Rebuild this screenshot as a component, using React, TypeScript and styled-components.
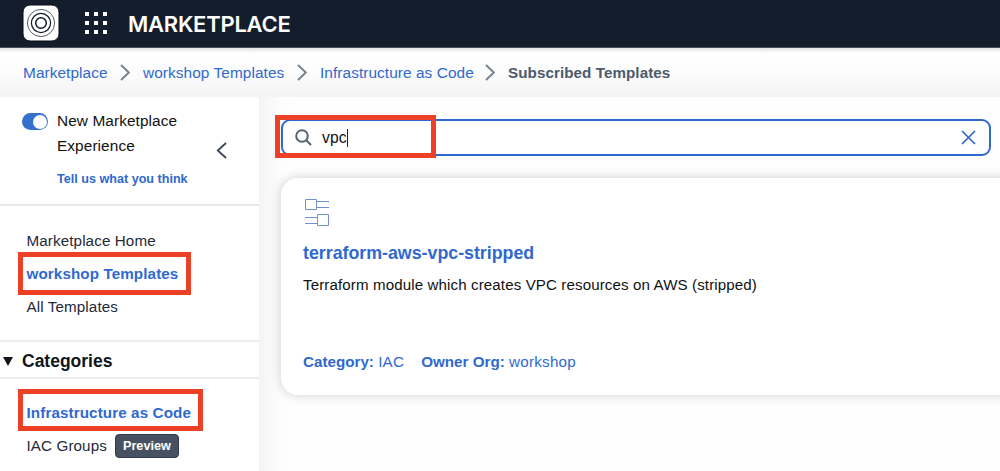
import React from "react";
import styled, { createGlobalStyle } from "styled-components";

const blue = "#2f69cf";
const red = "#ec4126";

const GlobalStyle = createGlobalStyle`
  *, *::before, *::after { box-sizing: border-box; }
  body { margin: 0; background: #fff; overflow: hidden; font-family: "Liberation Sans", Arial, sans-serif; }
`;

const Page = styled.div`
  display: flex;
  flex-direction: column;
  width: 1000px;
  height: 471px;
  overflow: hidden;
  background: #fff;
  color: #111;
`;

const Header = styled.header`
  display: flex;
  align-items: center;
  flex: 0 0 48px;
  padding: 0 0 2px 22px;
  background: #141d2b;
  border-bottom: 1px solid #4a4c5a;
`;

const Logo = styled.svg`
  width: 38px;
  height: 38px;
`;

const Waffle = styled.svg`
  width: 24px;
  height: 24px;
  margin-left: 24px;
`;

const Brand = styled.h1`
  margin: 2px 0 0 20px;
  font: 600 22px/28px Inter, sans-serif;
  letter-spacing: -0.25px;
  color: #fff;
`;

const Breadcrumbs = styled.nav`
  display: flex;
  align-items: center;
  flex: 0 0 49px;
  padding: 0 0 0 23px;
  background: linear-gradient(#e2e2e6 0, #fff 5px, #fdfdfd 45%, #f4f4f4);
  font-size: 15.4px;
  letter-spacing: 0.07px;
`;

const Crumb = styled.a<{ $width: number; $current?: boolean }>`
  width: ${(p) => p.$width}px;
  white-space: nowrap;
  color: ${(p) => (p.$current ? "#4c5a6b" : blue)};
  font-weight: ${(p) => (p.$current ? 700 : 400)};
  font-size: ${(p) => (p.$current ? "15.2px" : "inherit")};
`;

const Separator = styled.svg`
  width: 10px;
  height: 17px;
  margin: 0 13px 0 12px;
  fill: none;
  stroke: #778391;
  stroke-width: 1.9;
`;

const Body = styled.div`
  display: flex;
  flex: 1;
  min-height: 0;
`;

const Sidebar = styled.aside`
  flex: 0 0 259px;
  background: #fff;
`;

const Experience = styled.section`
  display: flex;
  height: 109px;
  padding: 12px 0 0 22px;
  border-bottom: 2px solid #e9e9e9;
`;

const Toggle = styled.span`
  display: flex;
  justify-content: flex-end;
  width: 26px;
  height: 17px;
  margin-top: 4px;
  padding: 1.5px;
  border-radius: 9px;
  background: #3471cc;
  &::after {
    content: "";
    width: 14px;
    height: 14px;
    border-radius: 50%;
    background: #fff;
  }
`;

const ExperienceText = styled.div`
  width: 150px;
  margin-left: 9px;
  font-size: 15.4px;
  line-height: 24.5px;
  letter-spacing: 0.08px;
  white-space: nowrap;
`;

const Feedback = styled.a`
  display: block;
  margin-top: 9px;
  font-size: 12.6px;
  letter-spacing: 0;
  font-weight: 700;
  color: ${blue};
`;

const Collapse = styled.svg`
  width: 11px;
  height: 17px;
  margin: 33px 0 0 9px;
  fill: none;
  stroke: #394657;
  stroke-width: 1.8;
`;

const NavGroup = styled.ul<{ $height?: number }>`
  display: flex;
  flex-direction: column;
  height: ${(p) => (p.$height ? `${p.$height}px` : "auto")};
  margin: 0;
  padding: ${(p) => (p.$height ? 18 : 17)}px 0 0 26.5px;
  list-style: none;
  border-bottom: ${(p) => (p.$height ? "2px solid #ededed" : "none")};
`;

const NavItem = styled.li<{ $active?: boolean }>`
  position: relative;
  display: flex;
  align-items: center;
  height: 33px;
  font-size: 15.2px;
  letter-spacing: 0.11px;
  font-weight: ${(p) => (p.$active ? 700 : 400)};
  color: ${(p) => (p.$active ? blue : "#1f2938")};
  white-space: nowrap;
`;

const Highlight = styled.span<{ $left: number; $top: number; $width: number; $height: number }>`
  position: absolute;
  left: ${(p) => p.$left}px;
  top: ${(p) => p.$top}px;
  width: ${(p) => p.$width}px;
  height: ${(p) => p.$height}px;
  border: 5px solid ${red};
  pointer-events: none;
`;

const CategoryTitle = styled.h2`
  display: flex;
  align-items: center;
  height: 37px;
  margin: 0;
  padding: 4px 0 0 3px;
  border-bottom: 2px solid #ededed;
  font-size: 17.5px;
  color: #10151c;
`;

const Caret = styled.svg`
  width: 10px;
  height: 9px;
  margin-right: 9px;
`;

const Badge = styled.span`
  width: 64px;
  height: 24px;
  margin-left: 8px;
  border: 1px solid #303c4e;
  border-radius: 4px;
  background: #465161;
  color: #fff;
  font-size: 12.7px;
  letter-spacing: 0;
  font-weight: 700;
  line-height: 22px;
  text-align: center;
`;

const Main = styled.main`
  flex: 1;
  min-width: 0;
  padding: 22px 0 0 22px;
  background: linear-gradient(90deg, #f4f4f4 0, #f8f8f8 9px, #fdfdfd 22px, #fefefe 32px);
`;

const Search = styled.div`
  position: relative;
  display: flex;
  align-items: center;
  width: 710px;
  height: 37px;
  padding: 0 14px;
  border: 2px solid ${blue};
  border-radius: 9px;
  background: #fff;
`;

const SearchIcon = styled.svg`
  width: 17px;
  height: 17px;
  margin-left: -2px;
  fill: none;
  stroke: #566273;
  stroke-width: 2;
`;

const Query = styled.span`
  display: flex;
  align-items: center;
  flex: 1;
  margin-left: 10px;
  font-size: 15.6px;
  letter-spacing: 0.2px;
  color: #111;
  &::after {
    content: "";
    width: 1px;
    height: 18px;
    background: #222;
  }
`;

const Clear = styled.svg`
  width: 15px;
  height: 15px;
  margin-right: -1px;
  stroke: ${blue};
  stroke-width: 1.7;
`;

const Card = styled.article`
  display: flex;
  flex-direction: column;
  width: 760px;
  height: 217px;
  margin-top: 22px;
  padding: 20px 0 0 22px;
  border-radius: 17px;
  background: #fff;
  box-shadow: 0 0 12px rgba(0, 0, 0, 0.19);
`;

const ModuleIcon = styled.svg`
  width: 27px;
  height: 29px;
  fill: none;
  stroke: #7192cc;
  stroke-width: 1;
`;

const CardTitle = styled.h3`
  margin: 16px 0 0;
  font-size: 17.8px;
  line-height: 20px;
  color: ${blue};
`;

const Description = styled.p`
  margin: 13px 0 0;
  font-size: 15.1px;
  letter-spacing: 0.12px;
  line-height: 18px;
`;

const Meta = styled.div`
  display: flex;
  gap: 17px;
  margin-top: 59px;
  font-size: 15.2px;
  line-height: 18px;
  color: ${blue};
`;

const MetaValue = styled.span`
  letter-spacing: 0.25px;
`;

const Chevron = () => (
  <Separator viewBox="0 0 10 17">
    <path d="M1 1l7.8 7.5L1 16" />
  </Separator>
);

export default function App() {
  return (
    <Page>
      <GlobalStyle />
      <Header>
        <Logo viewBox="0 0 38 38">
          <rect x="1" y="1" width="36" height="36" rx="7" fill="#fff" stroke="#050a12" />
          <g fill="none" stroke="#111a28">
            <circle cx="19" cy="19" r="5.3" strokeWidth="1.5" />
            <circle cx="19" cy="19" r="9.6" strokeWidth="1.2" />
            <circle cx="19" cy="19" r="13.6" strokeWidth=".7" />
          </g>
        </Logo>
        <Waffle viewBox="0 0 24 24" fill="#fff">
          {[1, 10, 19].map((y) => [1, 10, 19].map((x) => <rect key={`${x}-${y}`} x={x} y={y} width="4" height="4" />))}
        </Waffle>
        <Brand>MARKETPLACE</Brand>
      </Header>
      <Breadcrumbs>
        <Crumb $width={85}>Marketplace</Crumb>
        <Chevron />
        <Crumb $width={142}>workshop Templates</Crumb>
        <Chevron />
        <Crumb $width={153}>Infrastructure as Code</Crumb>
        <Chevron />
        <Crumb $width={165} $current>Subscribed Templates</Crumb>
      </Breadcrumbs>
      <Body>
        <Sidebar>
          <Experience>
            <Toggle />
            <ExperienceText>
              New Marketplace<br />Experience
              <Feedback>Tell us what you think</Feedback>
            </ExperienceText>
            <Collapse viewBox="0 0 11 17">
              <path d="M10 1L1.8 8.5 10 16" />
            </Collapse>
          </Experience>
          <NavGroup $height={136}>
            <NavItem>Marketplace Home</NavItem>
            <NavItem $active>
              workshop Templates
              <Highlight $left={-9} $top={-5} $width={173} $height={43} />
            </NavItem>
            <NavItem>All Templates</NavItem>
          </NavGroup>
          <CategoryTitle>
            <Caret viewBox="0 0 10 9"><path d="M0 0h10L5 9z" fill="#10151c" /></Caret>
            Categories
          </CategoryTitle>
          <NavGroup>
            <NavItem $active>
              Infrastructure as Code
              <Highlight $left={-9} $top={-7} $width={185} $height={42} />
            </NavItem>
            <NavItem>IAC Groups<Badge>Preview</Badge></NavItem>
          </NavGroup>
        </Sidebar>
        <Main>
          <Search>
            <SearchIcon viewBox="0 0 17 17">
              <circle cx="7" cy="7" r="5.8" />
              <path d="M11 11l5 5" />
            </SearchIcon>
            <Query>vpc</Query>
            <Clear viewBox="0 0 15 15"><path d="M1 1l13 13M14 1L1 14" /></Clear>
            <Highlight $left={-8} $top={-6} $width={161} $height={43} />
          </Search>
          <Card>
            <ModuleIcon viewBox="0 0 27 29">
              <path d="M2.5 1.5h11v10h-11zM14 3.5h12M14 9.5h12M2 19.5h12M2 25.5h12M14.5 16.5h11v11h-11z" />
            </ModuleIcon>
            <CardTitle>terraform-aws-vpc-stripped</CardTitle>
            <Description>Terraform module which creates VPC resources on AWS (stripped)</Description>
            <Meta>
              <span><b>Category:</b> <MetaValue>IAC</MetaValue></span>
              <span><b>Owner Org:</b> <MetaValue>workshop</MetaValue></span>
            </Meta>
          </Card>
        </Main>
      </Body>
    </Page>
  );
}
